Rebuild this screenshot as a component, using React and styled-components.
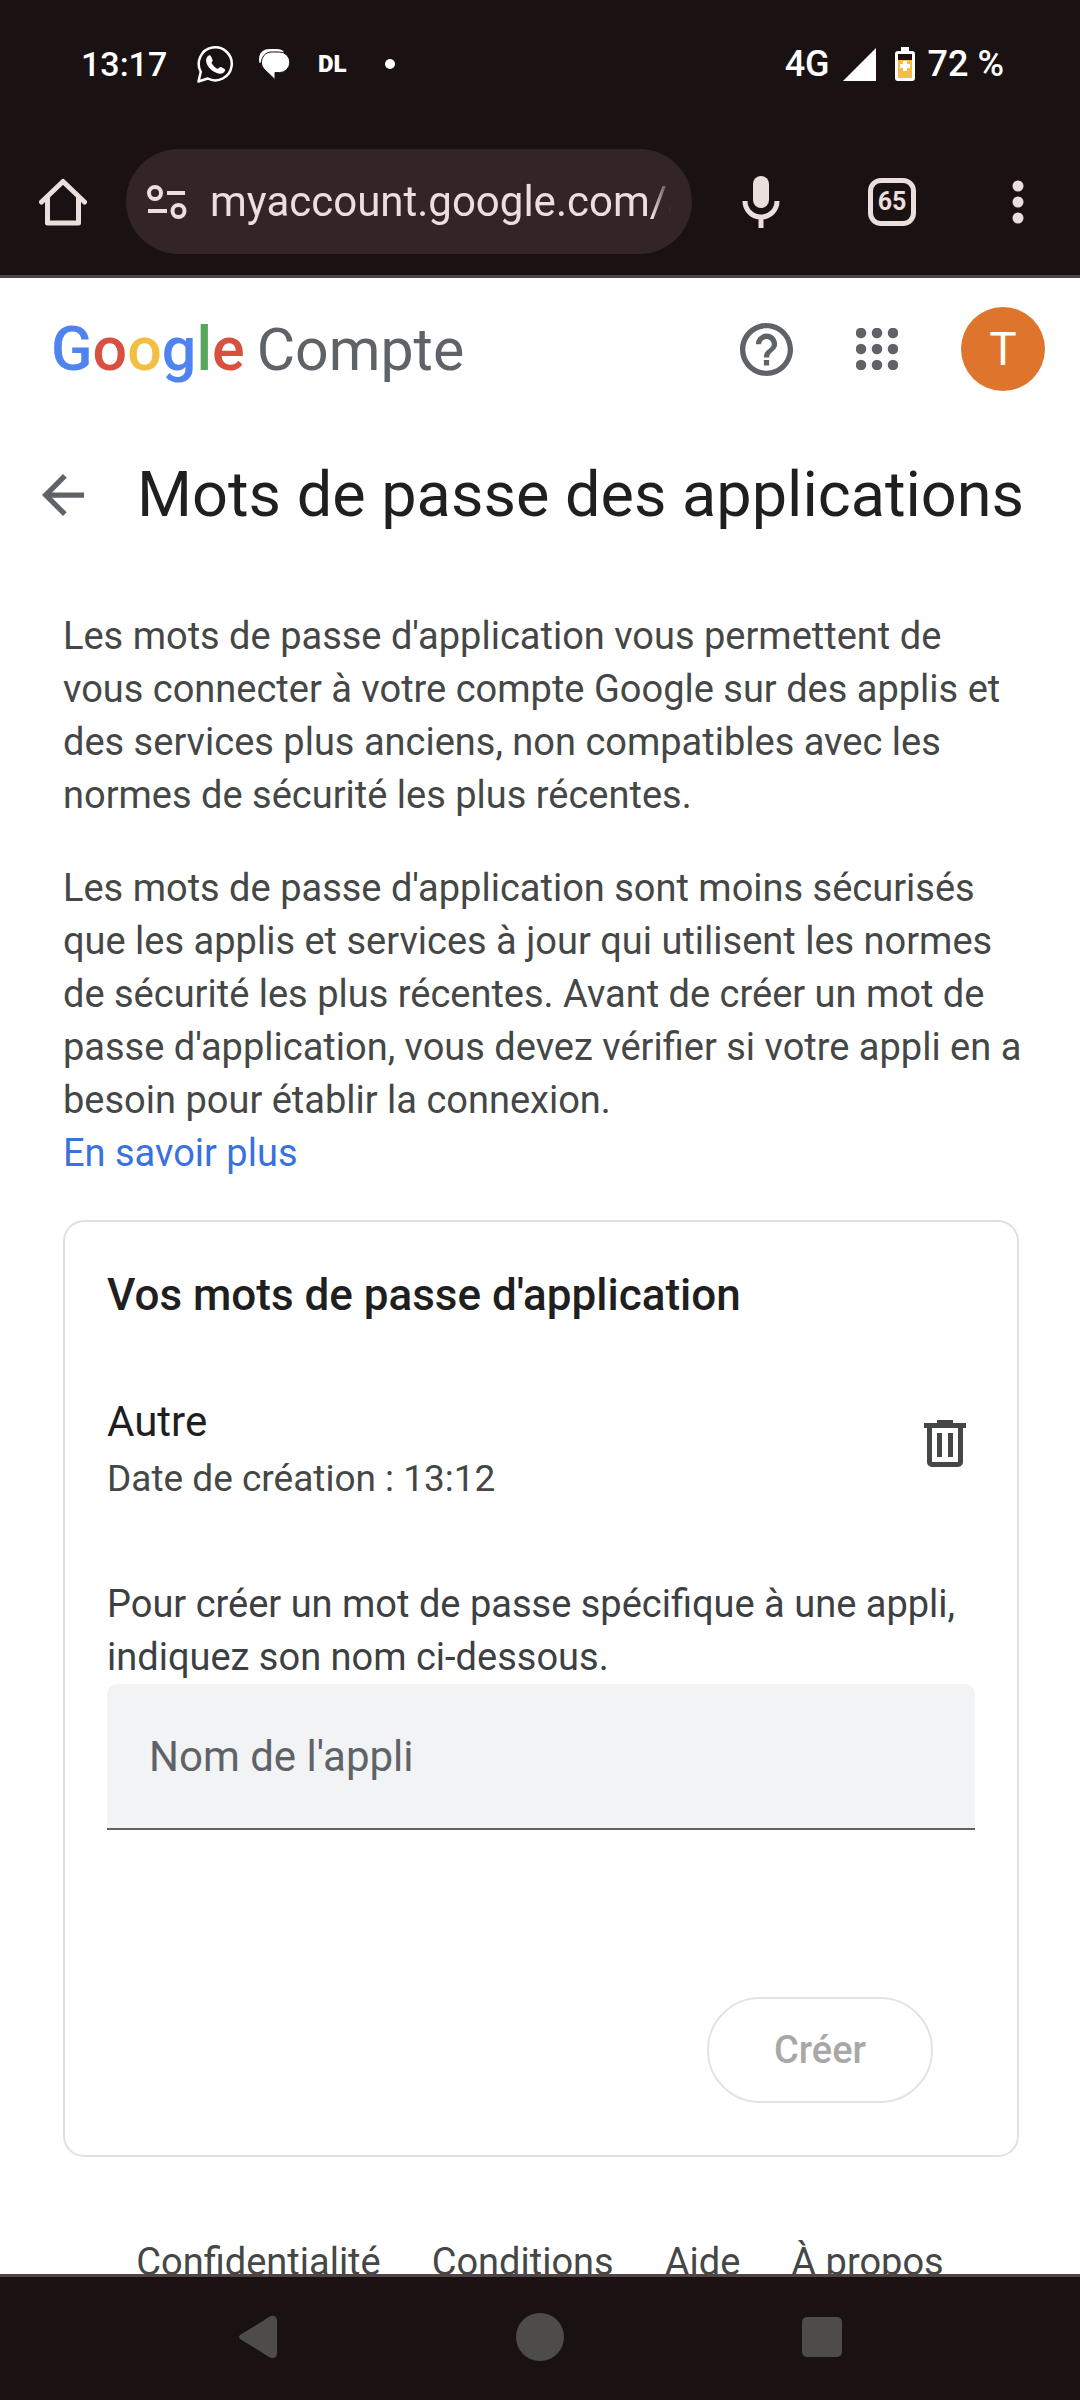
import styled, { createGlobalStyle } from 'styled-components';

const GlobalStyle = createGlobalStyle`
  * {
    box-sizing: border-box;
  }
  body {
    margin: 0;
    font-family: Roboto, 'Liberation Sans', sans-serif;
    background-color: #fff;
  }
  button {
    padding: 0;
    border: 0;
    background: none;
    color: inherit;
    font: inherit;
    cursor: pointer;
  }
  svg {
    display: block;
  }
`;

const App = () => {
  return (
    <Screen>
      <GlobalStyle />
      <StatusBar />
      <BrowserBar />
      <Viewport>
        <AccountHeader />
        <TitleRow>
          <IconButton aria-label="Retour">
            <ArrowIcon />
          </IconButton>
          <h1>Mots de passe des applications</h1>
        </TitleRow>
        <Content>
          <Paragraph>
            Les mots de passe d'application vous permettent de <br />
            vous connecter à votre compte Google sur des applis et <br />
            des services plus anciens, non compatibles avec les <br />
            normes de sécurité les plus récentes.
          </Paragraph>
          <Paragraph>
            Les mots de passe d'application sont moins sécurisés <br />
            que les applis et services à jour qui utilisent les normes <br />
            de sécurité les plus récentes. Avant de créer un mot de <br />
            passe d'application, vous devez vérifier si votre appli en a <br />
            besoin pour établir la connexion. <br />
            <a href="#aide">En savoir plus</a>
          </Paragraph>
          <PasswordCard />
        </Content>
        <Footer>
          <a href="#confidentialite">Confidentialité</a>
          <a href="#conditions">Conditions</a>
          <a href="#aide">Aide</a>
          <a href="#apropos">À propos</a>
        </Footer>
      </Viewport>
      <SystemNav />
    </Screen>
  );
};

export default App;

const StatusBar = () => (
  <StatusWrapper>
    <Clock>13:17</Clock>
    <Notifications>
      <WhatsappIcon />
      <ChatIcon />
      <AppBadge>DL</AppBadge>
      <Dot />
    </Notifications>
    <SignalGroup>
      <span>4G</span>
      <SignalIcon />
      <BatteryIcon />
      <span>72 %</span>
    </SignalGroup>
  </StatusWrapper>
);

const BrowserBar = () => (
  <BrowserWrapper>
    <IconButton aria-label="Accueil">
      <HomeIcon />
    </IconButton>
    <AddressBar>
      <TuneIcon />
      <AddressText aria-label="Adresse" defaultValue="myaccount.google.com/apppasswords" />
    </AddressBar>
    <BrowserActions>
      <IconButton aria-label="Recherche vocale">
        <MicIcon />
      </IconButton>
      <TabCount aria-label="Onglets ouverts">65</TabCount>
      <IconButton aria-label="Menu">
        <MoreIcon />
      </IconButton>
    </BrowserActions>
  </BrowserWrapper>
);

const LOGO = [
  ['G', '#4f83f0'],
  ['o', '#d85140'],
  ['o', '#f2bf42'],
  ['g', '#4f83f0'],
  ['l', '#58a55c'],
  ['e', '#d85140'],
];

const AccountHeader = () => (
  <HeaderWrapper>
    <Brand href="#compte">
      <Wordmark>
        {LOGO.map(([letter, color], index) => (
          <Letter key={index} $color={color}>
            {letter}
          </Letter>
        ))}
      </Wordmark>
      <Product>Compte</Product>
    </Brand>
    <HeaderActions>
      <IconButton aria-label="Aide">
        <HelpIcon />
      </IconButton>
      <IconButton aria-label="Applications Google">
        <AppsIcon />
      </IconButton>
      <Avatar aria-label="Compte Google">T</Avatar>
    </HeaderActions>
  </HeaderWrapper>
);

const PasswordCard = () => (
  <Card>
    <h2>Vos mots de passe d'application</h2>
    <PasswordRow>
      <div>
        <PasswordName>Autre</PasswordName>
        <PasswordDate>Date de création : 13:12</PasswordDate>
      </div>
      <DeleteButton aria-label="Supprimer">
        <TrashIcon />
      </DeleteButton>
    </PasswordRow>
    <Form onSubmit={e => e.preventDefault()}>
      <label htmlFor="app-name">Pour créer un mot de passe spécifique à une appli, indiquez son nom ci-dessous.</label>
      <NameInput id="app-name" type="text" placeholder="Nom de l'appli" />
      <CreateButton type="submit" disabled>
        Créer
      </CreateButton>
    </Form>
  </Card>
);

const SystemNav = () => (
  <NavWrapper>
    <IconButton aria-label="Précédent">
      <svg width="40" height="46" viewBox="0 0 42 46" fill="#4e4c49">
        <path d="M3 20.500 33 1.700C37-.5 41 1.500 41 6v34c0 4.500-4 6.500-8 4.300L3 25.500c-2.500-1.500-2.500-3.500 0-5z" />
      </svg>
    </IconButton>
    <IconButton aria-label="Accueil du téléphone">
      <svg width="48" height="48" viewBox="0 0 48 48">
        <circle cx="24" cy="24" r="24" fill="#4e4c49" />
      </svg>
    </IconButton>
    <IconButton aria-label="Applications récentes">
      <svg width="40" height="40" viewBox="0 0 40 40">
        <rect width="40" height="40" rx="5" fill="#4e4c49" />
      </svg>
    </IconButton>
  </NavWrapper>
);

const WhatsappIcon = () => (
  <svg width="37" height="38" viewBox="0 0 37 38" fill="none">
    <path
      d="M1.500 36.500l2.300-9.700A16.500 16.500 0 1 1 10.700 33.500z"
      stroke="#fff"
      strokeWidth="2.500"
      strokeLinejoin="round"
    />
    <path
      d="M11 11c1-1 2.300-1 3 .2l1.500 3.500c.4 1-.1 1.900-1.100 3 1.600 3.100 3.600 5 6.500 6.200 1.300-1.500 2.100-2.200 3.100-1.800l3.200 1.600c1 .5 1.100 1.300.6 2.400-.9 2.100-3.100 3-5.500 2.600-6.500-1-12.700-7.100-13.200-12.700-.1-1.900.6-3.800 1.900-5z"
      fill="#fff"
    />
  </svg>
);

const ChatIcon = () => (
  <svg width="32" height="32" viewBox="0 0 32 32" fill="none">
    <path d="M1.500 15C-.5 7 4 1 11 1h8c3 0 5.500 1 7 3" fill="#fff" />
    <path
      d="M13 4h8.500a10.300 10.300 0 0 1 0 20.600H17V31.500L6 21A10.300 10.300 0 0 1 13 4z"
      fill="#fff"
      stroke="#1a1112"
      strokeWidth="1"
    />
  </svg>
);

const SignalIcon = () => (
  <svg width="33" height="33" viewBox="0 0 33 33">
    <path d="M33 0v33H0z" fill="#fff" />
  </svg>
);

const BatteryIcon = () => (
  <svg width="20" height="34" viewBox="0 0 20 34">
    <path d="M6 0h8v4h3a3 3 0 0 1 3 3v24a3 3 0 0 1-3 3H3a3 3 0 0 1-3-3V7a3 3 0 0 1 3-3h3z" fill="#fff" />
    <path d="M3 7h14v6H3z" fill="#1a1112" />
    <path d="M3 13h14v18H3z" fill="#f2bf42" />
    <path d="M8 14h4v3h3v4h-3v3H8v-3H5v-4h3z" fill="#fff" />
  </svg>
);

const HomeIcon = () => (
  <svg width="48" height="48" viewBox="0 0 48 48" fill="none" stroke="#ebdfde" strokeWidth="5">
    <path d="M2.500 24 24 3.500 45.500 24" strokeLinecap="round" strokeLinejoin="round" />
    <path d="M8.500 19v26h31V19" strokeLinejoin="round" />
  </svg>
);

const TuneIcon = () => (
  <svg width="40" height="34" viewBox="0 0 40 34" fill="none" stroke="#ebdfde" strokeWidth="4">
    <circle cx="8" cy="8" r="6" />
    <path d="M20 8h18M1 26h19" />
    <circle cx="31.500" cy="26" r="6" />
  </svg>
);

const MicIcon = () => (
  <svg width="38" height="52" viewBox="0 0 38 52" fill="none">
    <rect x="11" y="0" width="16" height="32" rx="8" fill="#ebdfde" />
    <path d="M3 25c0 9 7 16 16 16s16-7 16-16M19 41v11" stroke="#ebdfde" strokeWidth="5" />
  </svg>
);

const MoreIcon = () => (
  <svg width="28" height="44" viewBox="0 0 28 44" fill="#ebdfde">
    <circle cx="14" cy="6" r="5.500" />
    <circle cx="14" cy="22" r="5.500" />
    <circle cx="14" cy="38" r="5.500" />
  </svg>
);

const HelpIcon = () => (
  <svg width="53" height="53" viewBox="2 2 20 20" fill="#5f6368">
    <path d="M11 18h2v-2h-2v2zm1-16C6.480 2 2 6.480 2 12s4.480 10 10 10 10-4.480 10-10S17.520 2 12 2zm0 18c-4.410 0-8-3.590-8-8s3.590-8 8-8 8 3.590 8 8-3.590 8-8 8zm0-14c-2.210 0-4 1.790-4 4h2c0-1.100.9-2 2-2s2 .9 2 2c0 2-3 1.750-3 5h2c0-2.250 3-2.500 3-5 0-2.210-1.790-4-4-4z" />
  </svg>
);

const AppsIcon = () => (
  <svg width="42" height="42" viewBox="0 0 42 42" fill="#5f6368">
    {[5, 21, 37].map(cy => [5, 21, 37].map(cx => <circle key={`${cx}-${cy}`} cx={cx} cy={cy} r="5.300" />))}
  </svg>
);

const ArrowIcon = () => (
  <svg width="42" height="42" viewBox="4 4 16 16" fill="#5f6368">
    <path d="M20 11H7.830l5.590-5.590L12 4l-8 8 8 8 1.410-1.410L7.830 13H20v-2z" />
  </svg>
);

const TrashIcon = () => (
  <svg width="42" height="48" viewBox="0 0 42 48" fill="#444746">
    <path d="M13 0h16v3h13v5h-3v34a5 5 0 0 1-5 5H8a5 5 0 0 1-5-5V8H0V3h13zM8 8v34h26V8z" fillRule="evenodd" />
    <path d="M13 13h5v24h-5zM24 13h5v24h-5z" />
  </svg>
);

const Screen = styled.div`
  display: flex;
  flex-direction: column;
  height: 100vh;
`;

const StatusWrapper = styled.div`
  display: flex;
  align-items: center;
  flex-shrink: 0;
  height: 128px;
  padding: 0 76px 0 81px;
  background-color: #1a1112;
  color: #fff;
  font-size: 36px;
  font-weight: 500;
`;

const Clock = styled.time`
  min-width: 88px;
  font-size: 34px;
`;

const Notifications = styled.div`
  display: flex;
  align-items: center;
  margin-left: 28px;
  gap: 24px;
`;

const AppBadge = styled.span`
  margin-left: 4px;
  font-size: 24px;
  font-weight: 900;
`;

const Dot = styled.span`
  width: 10px;
  height: 10px;
  margin-left: 14px;
  border-radius: 50%;
  background-color: #fff;
`;

const SignalGroup = styled.div`
  display: flex;
  align-items: center;
  gap: 13px;
  margin-left: auto;

  svg + svg {
    margin-left: 6px;
  }
`;

const IconButton = styled.button`
  display: flex;
  align-items: center;
  justify-content: center;
  flex-shrink: 0;
`;

const BrowserWrapper = styled.div`
  display: flex;
  align-items: center;
  flex-shrink: 0;
  height: 150px;
  padding: 0 48px 0 39px;
  background-color: #1a1112;
  border-bottom: 3px solid #524344;
`;

const AddressBar = styled.div`
  display: flex;
  align-items: center;
  flex: 1;
  gap: 23px;
  min-width: 0;
  height: 105px;
  margin: 0 50px 0 39px;
  padding: 0 21px;
  border-radius: 53px;
  background-color: #332525;

  svg {
    flex-shrink: 0;
  }
`;

const AddressText = styled.input`
  flex: 1;
  min-width: 0;
  padding: 0;
  border: 0;
  outline: 0;
  background: none;
  color: #ebdfde;
  font-family: inherit;
  font-size: 42px;
  mask-image: linear-gradient(to right, #000 96%, transparent);
`;

const BrowserActions = styled.div`
  display: flex;
  align-items: center;
  gap: 88px;
`;

const TabCount = styled.button`
  width: 48px;
  height: 48px;
  border: 5px solid #ebdfde;
  border-radius: 13px;
  color: #ebdfde;
  font-size: 25px;
  font-weight: 700;
`;

const Viewport = styled.main`
  flex: 1;
  min-height: 0;
  overflow: hidden;
  background-color: #fff;
`;

const HeaderWrapper = styled.header`
  display: flex;
  align-items: center;
  justify-content: space-between;
  height: 142px;
  padding: 0 35px 0 51px;
`;

const Brand = styled.a`
  display: flex;
  align-items: baseline;
  gap: 12px;
  text-decoration: none;
`;

const Wordmark = styled.span`
  font-size: 61px;
  font-weight: 500;
`;

const Letter = styled.span`
  color: ${props => props.$color};
`;

const Product = styled.span`
  color: #5f6368;
  font-size: 59px;
`;

const HeaderActions = styled.div`
  display: flex;
  align-items: center;
  gap: 63px;
`;

const Avatar = styled.button`
  width: 84px;
  height: 84px;
  border-radius: 50%;
  background-color: #df752c;
  color: #fff;
  font-size: 46px;
`;

const TitleRow = styled.div`
  display: flex;
  align-items: center;
  gap: 53px;
  padding: 33px 42px 0;

  h1 {
    margin: 0;
    color: #1f1f1f;
    font-size: 63px;
    font-weight: 400;
    line-height: 84px;
    white-space: nowrap;
  }
`;

const Content = styled.section`
  padding: 73px 61px 0 63px;
`;

const Paragraph = styled.p`
  margin: 0 -12px 40px 0;
  color: #444746;
  font-size: 38px;
  line-height: 53px;

  a {
    color: #3871e0;
    text-decoration: none;
  }
`;

const Card = styled.div`
  padding: 42px;
  border: 2px solid #e0e0e0;
  border-radius: 21px;

  h2 {
    margin: 0;
    color: #1f1f1f;
    font-size: 44px;
    font-weight: 500;
    line-height: 63px;
  }
`;

const PasswordRow = styled.div`
  display: flex;
  align-items: flex-start;
  justify-content: space-between;
  padding: 63px 9px 0 0;
`;

const PasswordName = styled.div`
  color: #1f1f1f;
  font-size: 42px;
  line-height: 63px;
`;

const PasswordDate = styled.div`
  color: #444746;
  font-size: 37px;
  line-height: 52px;
`;

const DeleteButton = styled(IconButton)`
  height: 108px;
`;

const Form = styled.form`
  display: flex;
  flex-direction: column;
  margin-top: 73px;

  label {
    color: #3c4043;
    font-size: 38px;
    line-height: 53px;
  }
`;

const NameInput = styled.input`
  width: 100%;
  height: 146px;
  padding: 0 42px;
  border: 0;
  border-bottom: 2px solid #5f6368;
  border-radius: 10px 10px 0 0;
  outline: 0;
  background-color: #f1f3f4;
  color: #1f1f1f;
  font-family: inherit;
  font-size: 42px;

  &::placeholder {
    color: #5f6368;
    opacity: 1;
  }
`;

const CreateButton = styled.button`
  align-self: flex-end;
  margin: 167px 42px 10px 0;
  padding: 0 65px;
  border: 2px solid #e3e3e3;
  border-radius: 53px;
  color: #a8a8a8;
  font-size: 38px;
  font-weight: 500;
  line-height: 102px;
`;

const Footer = styled.footer`
  display: flex;
  justify-content: center;
  gap: 51px;
  padding-top: 79px;

  a {
    color: #444746;
    font-size: 38px;
    line-height: 53px;
    text-decoration: none;
  }
`;

const NavWrapper = styled.nav`
  display: flex;
  align-items: center;
  justify-content: center;
  gap: 238px;
  flex-shrink: 0;
  height: 126px;
  padding-bottom: 3px;
  border-top: 3px solid #524344;
  background-color: #1a1112;
`;
